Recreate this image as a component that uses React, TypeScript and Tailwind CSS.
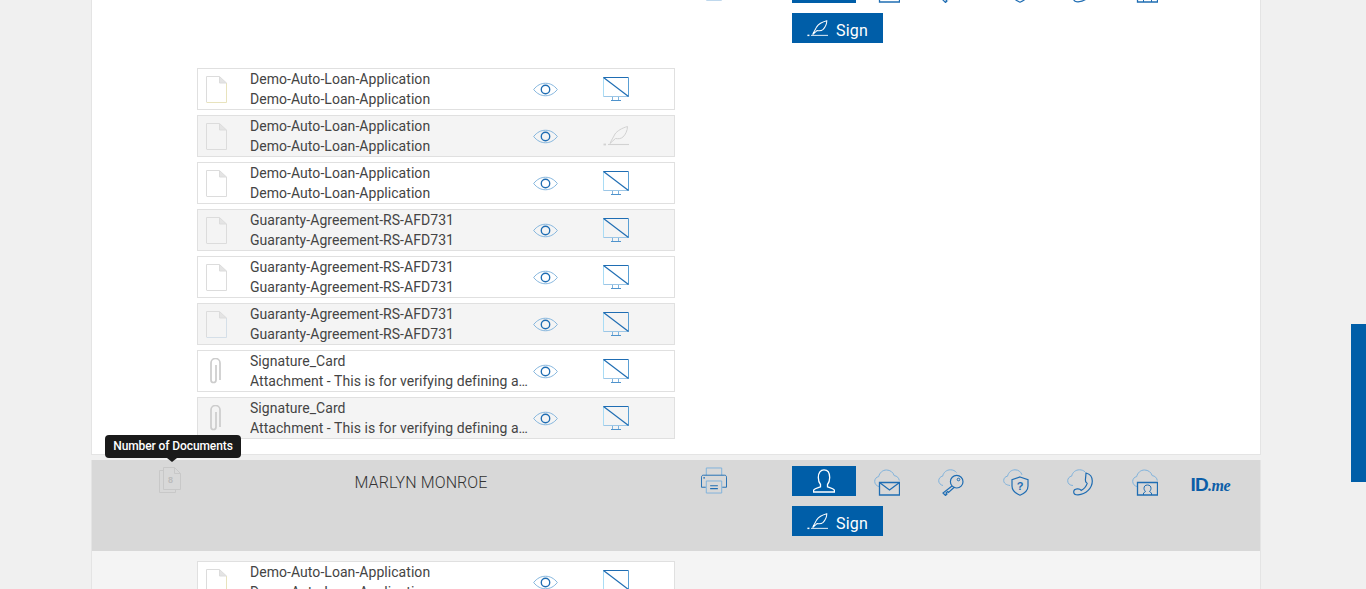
import React from "react";

const BLUE = "#1f6db3";
const PALE = "#7fb2dc";

const Eye = () => (
  <svg width="25" height="15" viewBox="0 0 26 15" fill="none" className="block">
    <path d="M.7 7.5C4 3.2 8.3 1 13 1s9 2.2 12.3 6.5C22 11.8 17.7 14 13 14S4 11.8.7 7.5z" stroke={PALE} strokeWidth="1" />
    <circle cx="13" cy="7.5" r="4.4" stroke={BLUE} strokeWidth="1.4" />
  </svg>
);

const Monitor = () => (
  <svg width="26" height="24" viewBox="0 0 26 24" fill="none" className="block">
    <path d="M.5 19.5V.5" stroke="#a9dcf5" />
    <path d="M.5 19.5h25" stroke="#9cc6e6" />
    <path d="M.5.5h25" stroke={BLUE} />
    <path d="M25.500.5v19" stroke="#5a9fd4" />
    <path d="M.5.5l25 19" stroke={BLUE} strokeWidth="1.2" />
    <path d="M9.5 20v3.5M15.5 20v3.5" stroke={PALE} />
    <path d="M8 23.5h10" stroke="#4f93cc" />
  </svg>
);

const Feather = ({ color, width, height, weight }: { color: string; width: number; height: number; weight: number }) => (
  <svg width={width} height={height} viewBox="0 0 26 20" fill="none" className="block">
    <path d="M.5 18.500h2.500" stroke={color} strokeWidth="1.800" />
    <path d="M5 18.500h21" stroke={color} strokeWidth="1.100" />
    <path d="M7 17.500C9 13 10.500 11 12 8 14 5 19 2 24.500.5c0 4-2 8-4.500 10.500-2 1.800-5 2-7.500 1.500-1.500 1.300-3.500 3-5.500 5z" stroke={color} strokeWidth={weight} />
  </svg>
);

const FileIcon = ({ tint }: { tint: string }) => (
  <svg width="21" height="27" viewBox="0 0 21 27" fill="none" className="block">
    <path d="M.5 26V.5h13" stroke="#dcdcdc" />
    <path d="M.5 26.5h20V7" stroke={tint} />
    <path d="M13.5.5v6.5h7l-7-6.500z" fill="#e4e4e4" stroke="#dcdcdc" />
  </svg>
);

const Clip = () => (
  <svg width="11" height="26" viewBox="0 0 11 26" fill="none" className="block">
    <path d="M6 7v15a2.500 2.500 0 0 1-5 0V5a4.500 4.500 0 0 1 9 0v17" stroke="#cccccc" strokeWidth="1.700" />
  </svg>
);

const DocStack = ({ color }: { color: string }) => (
  <div className="relative w-[22px] h-[26px]">
    <svg width="22" height="26" viewBox="0 0 22 26" fill="none" className="block">
      <path d="M4.500 22.500V.5h11l6 6v16z" stroke={color} />
      <path d="M15.500.5v6h6" stroke={color} />
      <path d="M4 3.500H.5v22h16v-3" stroke={color} />
    </svg>
    <span className="absolute left-[9px] top-[7px] text-[9px] leading-[12px] font-bold text-[#bcbcbc] font-['Liberation_Sans',sans-serif]">8</span>
  </div>
);

const Printer = () => (
  <svg width="26" height="27" viewBox="0 0 27 27" fill="none" className="block">
    <path d="M5.500 8V.5h16V8" stroke={PALE} />
    <path d="M5 20.500H.5V10c0-1.200.8-2 2-2h22c1.200 0 2 .8 2 2v10.500H22" stroke={BLUE} />
    <rect x="2.500" y="10" width="1.500" height="1.500" fill={BLUE} />
    <path d="M5.500 14h16v12.500h-16z" stroke={PALE} />
    <path d="M9.500 19h8M9.500 22h8" stroke={BLUE} strokeWidth="1.200" />
  </svg>
);

const cloud = "M5 17.500C2.500 17 .7 15 .7 12.300c0-2.400 1.700-4.300 4-4.700C5.500 3.700 8.700 1 12.500 1c3.700 0 6.700 2.300 7.700 5.600 2.800.3 4.800 2.400 5.100 5";

const Person = ({ color }: { color: string }) => (
  <svg width="22" height="24" viewBox="0 0 22 24" fill="none" className="block">
    <path d="M7.500 15.500c-1-1.300-2.200-3.500-2.200-7C5.300 3.600 7.600.8 11 .8s5.700 2.800 5.700 7.700c0 3.500-1.200 5.700-2.200 7v2.300c2.500 1 5.500 1.600 6.700 3 .3.700.3 1.500.3 2.200H.5c0-.7 0-1.500.3-2.200 1.200-1.400 4.200-2 6.700-3z" stroke={color} strokeWidth="1.300" />
  </svg>
);

const CloudMail = () => (
  <svg width="26" height="27" viewBox="0 0 26 27" fill="none" className="block">
    <path d={cloud} stroke={PALE} />
    <path d="M5.500 13.500h20v12.500h-20z" stroke={BLUE} strokeWidth="1.300" fill="none" />
    <path d="M5.500 13.500l10 7.500 10-7.500" stroke={BLUE} strokeWidth="1.300" />
  </svg>
);

const CloudKey = () => (
  <svg width="26" height="27" viewBox="0 0 26 27" fill="none" className="block">
    <path d="M5 16.500C2.500 16 .7 14 .7 11.800c0-2.400 1.700-4.300 4-4.700C5.500 3.200 8.700.8 12.500.8c2.500 0 4.500 1 6 2.700" stroke={PALE} />
    <circle cx="18.700" cy="12.700" r="6.300" stroke={BLUE} strokeWidth="1.200" />
    <circle cx="20.500" cy="10.500" r="1.300" stroke={BLUE} />
    <path d="M14 17L5 24l2.500 2.500 1.500-1.500-1-1 1.500-1.500 1 1 6-5.500" stroke={BLUE} strokeWidth="1.200" />
  </svg>
);

const CloudShield = () => (
  <svg width="26" height="27" viewBox="0 0 26 27" fill="none" className="block">
    <path d="M7 16.500C3 16 .7 14 .7 11.500c0-2.400 1.700-4 3.800-4.300C5.500 3.200 8.500.8 12 .8c3.400 0 6 2 7 5" stroke={PALE} />
    <path d="M17 8l8 2.700V17c0 4.200-3 7.200-8 9.200-5-2-8-5-8-9.200v-6.300z" stroke={BLUE} strokeWidth="1.200" />
    <text x="17" y="21" textAnchor="middle" fontSize="11" fontWeight="700" fill={BLUE} fontFamily="Liberation Sans, sans-serif">?</text>
  </svg>
);

const CloudPhone = () => (
  <svg width="26" height="27" viewBox="0 0 26 27" fill="none" className="block">
    <path d="M6 16.500C2.800 16.500.7 14.500.7 11.800c0-2.400 1.700-4.300 4-4.700C5.500 3.200 8.700.8 12.500.8c2.200 0 4 .7 5.500 2" stroke={PALE} />
    <path d="M19 4c4 1 6.300 4 6.300 8 0 7-6.300 13.500-14.300 13.800-2.500 0-4.300-1.100-4.300-2.900 0-1.600 1.500-2.800 3.500-3 1.800-.2 3.200.4 4 1.500 3-1.500 5-4 6-7-1.300-.8-2-2-1.800-3.700.2-2 .5-4.500.6-6.700z" stroke={BLUE} strokeWidth="1.200" />
  </svg>
);

const CloudId = () => (
  <svg width="26" height="27" viewBox="0 0 26 27" fill="none" className="block">
    <path d={cloud} stroke={PALE} />
    <path d="M5.500 13.500h20v12.500h-20z" stroke={BLUE} strokeWidth="1.300" fill="none" />
    <path d="M11.500 26v-2l2-1.500c-1-1-1.500-2-1.500-3.200 0-2 1.200-3.300 3.500-3.300s3.500 1.300 3.500 3.300c0 1.200-.5 2.200-1.500 3.200l2 1.500v2" stroke={BLUE} />
  </svg>
);

const DocRow = ({ title, sub, icon, alt, signed }: { title: string; sub: string; icon: React.ReactNode; alt: boolean; signed?: boolean }) => (
  <div className={`flex items-center h-[42px] border border-[#e0e0e0] ${alt ? "bg-[#f4f4f4]" : "bg-white"}`}>
    <div className="w-[52px] pl-2 shrink-0">{icon}</div>
    <div className="w-[280px] shrink-0 text-sm leading-5 tracking-[0.05px] text-[#444444]">
      <div className="truncate">{title}</div>
      <div className="truncate">{sub}</div>
    </div>
    <div className="ml-[3px] w-[70px] shrink-0"><Eye /></div>
    {signed ? <Feather color="#d2d2d2" width={26} height={20} weight={1} /> : <Monitor />}
  </div>
);

const demo = "Demo-Auto-Loan-Application";
const guaranty = "Guaranty-Agreement-RS-AFD731";
const attachment = "Attachment - This is for verifying defining any signature card details";

const rows = [
  { title: demo, sub: demo, tint: "#e8e3bd" },
  { title: demo, sub: demo, tint: "#dcdcdc", signed: true },
  { title: demo, sub: demo, tint: "#dcdcdc" },
  { title: guaranty, sub: guaranty, tint: "#dcdcdc" },
  { title: guaranty, sub: guaranty, tint: "#dcdcdc" },
  { title: guaranty, sub: guaranty, tint: "#d5dfe8" },
  { title: "Signature_Card", sub: attachment, clip: true },
  { title: "Signature_Card", sub: attachment, clip: true },
];

const Header = ({ name, active }: { name?: string; active?: boolean }) => (
  <div className={`flex h-[91px] pt-[6px] pl-[67px] ${active ? "bg-[#d8d8d8]" : ""}`}>
    <div className="pt-px"><DocStack color={active ? "#c8c8c8" : "#dcdcdc"} /></div>
    <div className="w-[480px] pt-px text-center text-base leading-[32px] tracking-[0.1px] font-light text-[#333333]">{name}</div>
    <div className="ml-[40px] w-[27px] pt-px"><Printer /></div>
    <div className="ml-[64px]">
      <div className="flex items-start h-[30px]">
        <div className="w-16 h-[30px] bg-[#005ea8] flex items-center justify-center"><Person color="#ffffff" /></div>
        <div className="flex gap-[38.400px] ml-[18px] pt-[3px]">
          <CloudMail />
          <CloudKey />
          <CloudShield />
          <CloudPhone />
          <CloudId />
        </div>
        <div className="ml-[33px] pt-[9px] leading-5 text-[#0b5ea8] font-['Liberation_Sans',sans-serif] text-[19px] font-bold tracking-[-0.8px] whitespace-nowrap">
          ID<span className="font-['Liberation_Serif',serif] italic font-bold text-[16px] tracking-[-0.4px]">.me</span>
        </div>
      </div>
      <button className="mt-[10px] w-[91px] h-[30px] bg-[#005ea8] flex items-center pl-[15px] gap-2 text-white text-base">
        <Feather color="#ffffff" width={21} height={17} weight={1.3} />
        <span className="pt-[5px] leading-5 tracking-[0.2px]">Sign</span>
      </button>
    </div>
  </div>
);

const Rows = () => (
  <div className="w-[478px] ml-[105px] mt-[10px] flex flex-col gap-[5px]">
    {rows.map((r, i) => (
      <DocRow
        key={i}
        title={r.title}
        sub={r.sub}
        alt={i % 2 === 1}
        signed={r.signed}
        icon={r.clip ? <div className="pl-1"><Clip /></div> : <FileIcon tint={r.tint ?? "#dcdcdc"} />}
      />
    ))}
  </div>
);

export default function App() {
  return (
    <main className="relative h-[589px] overflow-hidden bg-[#f0f0f0] font-['Roboto',sans-serif]">
      <div className="w-[1170px] ml-[91px] -mt-[33px] flex flex-col gap-[5px]">
        <section className="bg-white border-x border-b border-[#e4e4e4] pb-[15px]">
          <Header />
          <Rows />
        </section>
        <section className="bg-[#f4f4f4] border-x border-[#e4e4e4]">
          <Header name="MARLYN MONROE" active />
          <Rows />
        </section>
      </div>

      <div className="absolute left-[105px] top-[435px] h-[23px] w-[136px] rounded bg-[#1a1a1a] text-white text-xs leading-[23px] tracking-[-0.1px] text-center font-medium">
        Number of Documents
        <div className="absolute left-[62px] top-[23px] border-x-[5px] border-t-[4px] border-x-transparent border-t-[#1a1a1a]" />
      </div>

      <div className="absolute right-0 top-[324px] w-[15px] h-[158px] bg-[#005ea8]" />
    </main>
  );
}
